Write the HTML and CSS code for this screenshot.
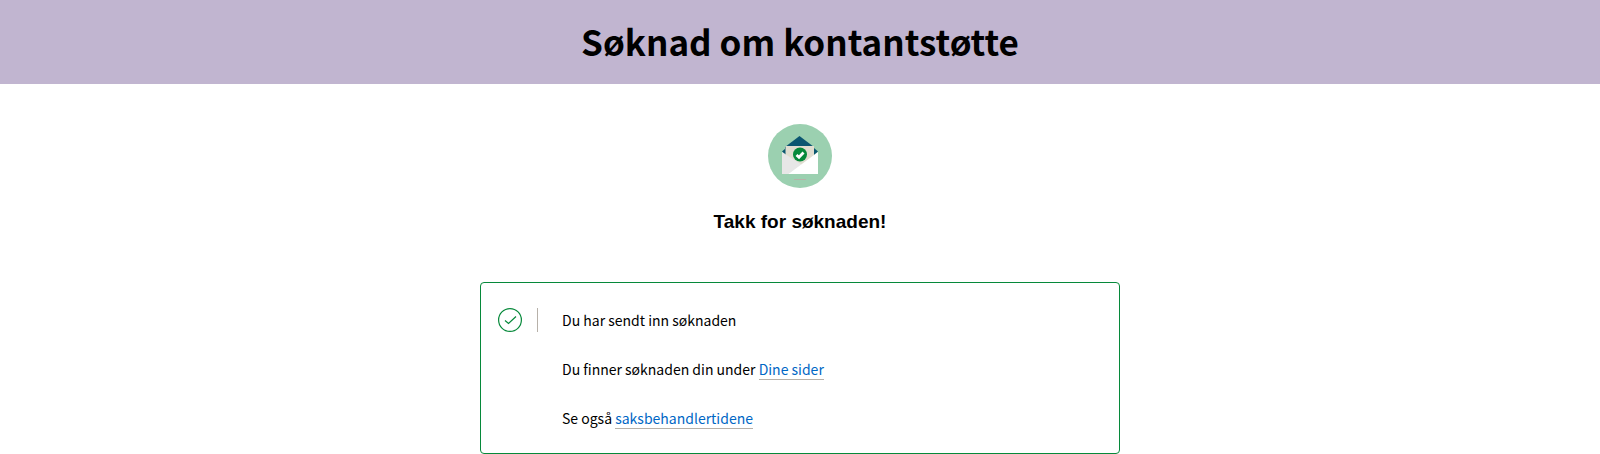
FILE: index.html
```html
<!DOCTYPE html>
<html lang="nb">
<head>
<meta charset="utf-8">
<title>Søknad om kontantstøtte</title>
<link rel="stylesheet" href="styles.css">
</head>
<body>
<header class="banner"><h1 class="banner-title">Søknad om kontantstøtte</h1></header>
<main class="content">
  <svg class="letter" viewBox="0 0 64 64" aria-hidden="true">
    <circle cx="32" cy="32" r="32" fill="#9bd0b0"/>
    <path d="M31.500 12L17 23V30H46V23Z" fill="#0b5671"/>
    <path d="M14 27.500L18 24V31ZM50 27.500L46 24V31Z" fill="#0b5671"/>
    <path d="M17.500 22H46V34L32 42L17.500 31Z" fill="#e0ddd0"/>
    <path d="M14 28L34 41L29 50H14Z" fill="#e7e7e7"/>
    <path d="M50 28V50H20.500Z" fill="#fff"/>
    <circle cx="32" cy="30.500" r="7" fill="#06893a"/>
    <path d="M28.500 31L31 33.200L35.500 28.500" fill="none" stroke="#fff" stroke-width="2.800"/>
    <path d="M26 55.500H38" stroke="#b7b1a9" stroke-width="1"/>
  </svg>
  <h2 class="thanks">Takk for søknaden!</h2>
  <section class="panel">
    <svg class="check" viewBox="0 0 24 24" role="img" aria-label="Suksess">
      <g fill="none" stroke="#06893a" stroke-width="1.200">
        <circle cx="12" cy="12" r="11.400"/>
        <path d="M7 12.500L10.500 15.500L18 8.500"/>
      </g>
    </svg>
    <div class="divider"></div>
    <div class="messages">
      <p class="message">Du har sendt inn søknaden</p>
      <p class="message">Du finner søknaden din under <a class="link" href="#">Dine sider</a></p>
      <p class="message">Se også <a class="link" href="#">saksbehandlertidene</a></p>
    </div>
  </section>
</main>
</body>
</html>
```
FILE: styles.css
```css
* { box-sizing: border-box; }
body {
  margin: 0;
  background: #fff;
  color: #000;
  font: 14px/24px "Noto Sans CJK SC", sans-serif;
}
.banner {
  padding: 15px 16px 17px;
  background: #c1b5d0;
  text-align: center;
}
.banner-title {
  margin: 0;
  font-size: 35px;
  line-height: 52px;
  font-weight: 700;
}
.content {
  display: flex;
  flex-direction: column;
  align-items: center;
  max-width: 640px;
  margin: 0 auto;
  padding-top: 40px;
}
.letter { width: 64px; height: 64px; }
.thanks {
  margin: 21px 0 47px;
  font: bold 19px/26px "Liberation Sans", Arial, sans-serif;
}
.panel {
  display: flex;
  align-items: flex-start;
  width: 100%;
  padding: 25px 17px 23px;
  border: 1px solid #06893a;
  border-radius: 4px;
}
.check { flex: none; width: 24px; height: 24px; }
.divider {
  flex: none;
  width: 1px;
  height: 24px;
  margin: 0 24px 0 15px;
  background: #b7b1a9;
}
.messages { flex: 1; }
.message { margin: 0 0 25px; }
.message:last-child { margin: 0; }
.link {
  color: #0067c5;
  text-decoration: none;
  border-bottom: 1px solid #b7b1a9;
}
```
